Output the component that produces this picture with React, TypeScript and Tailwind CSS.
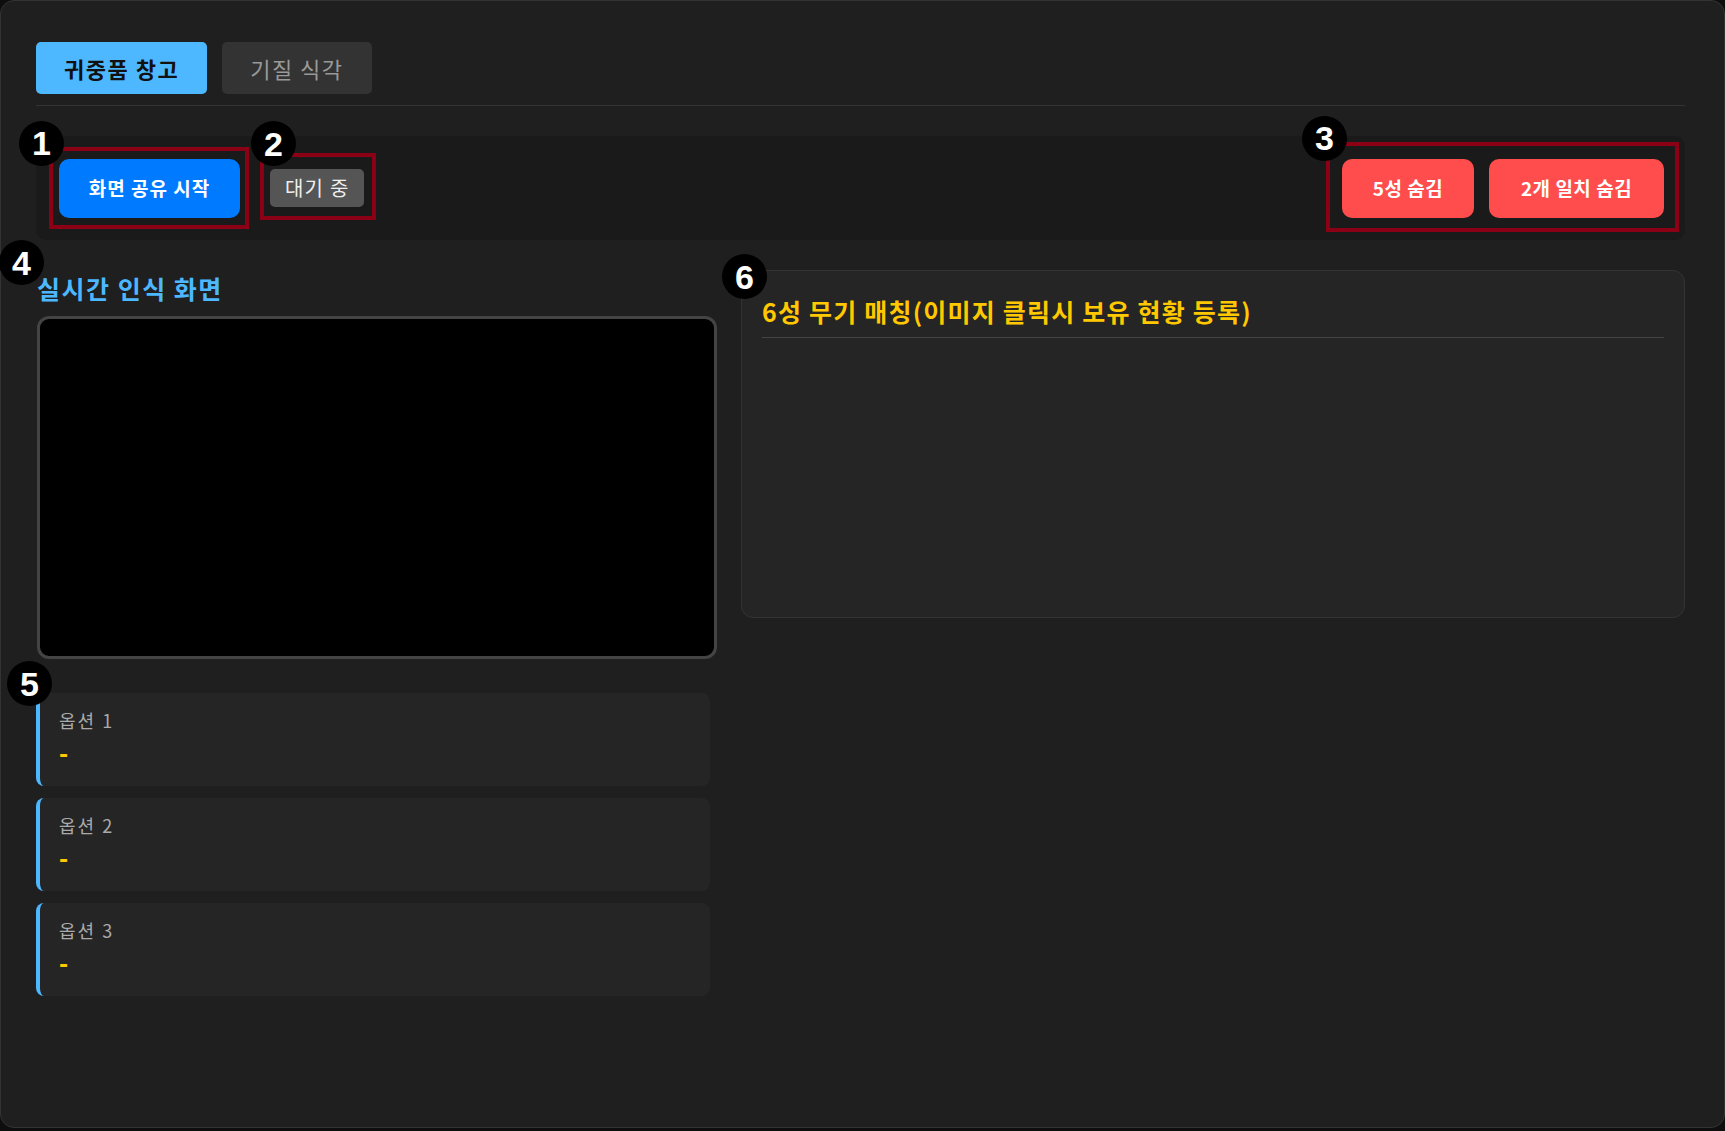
import React from "react";

function Marker({ n, className }: { n: number; className: string }) {
  return (
    <div
      className={`absolute z-20 flex h-[45px] w-[45px] items-center justify-center rounded-full bg-black font-['Liberation_Sans',sans-serif] text-[34px] font-bold leading-none text-white ${className}`}
    >
      {n}
    </div>
  );
}

function Outline({ className }: { className: string }) {
  return (
    <div
      className={`pointer-events-none absolute z-10 border-4 border-[#8b0014] ${className}`}
    />
  );
}

const options = ["옵션 1", "옵션 2", "옵션 3"];

export default function App() {
  return (
    <div className="min-h-screen bg-[#0e0e0e] font-['Noto_Sans_CJK_KR','Noto_Sans',sans-serif]">
      <div className="box-border h-[1128px] w-full rounded-[14px] border border-[#333] bg-[#1f1f1f] pl-[35px] pr-[39px] pt-[41px]">
        {/* tabs */}
        <div className="flex gap-[15px] border-b border-[#333] pb-[11px]">
          <button className="h-[52px] rounded-[5px] bg-[#4db8ff] px-[28px] text-[22px] font-bold tracking-[1.5px] text-[#111]">
            귀중품 창고
          </button>
          <button className="h-[52px] rounded-[5px] bg-[#333] px-[28px] text-[22px] tracking-[1.5px] text-[#999]">
            기질 식각
          </button>
        </div>

        {/* control bar */}
        <div className="mt-[30px] flex h-[104px] items-center justify-between rounded-[10px] bg-[#1a1a1a] pl-[23px] pr-[21px]">
          <div className="flex items-center">
            <div className="relative">
              <Outline className="-bottom-[11px] -left-[10px] -right-[9px] -top-[12px]" />
              <Marker n={1} className="-left-[40px] -top-[38px]" />
              <button className="relative z-0 h-[59px] w-[181px] rounded-[10px] bg-[#007bff] text-[19px] font-bold tracking-[1px] text-white">
                화면 공유 시작
              </button>
            </div>
            <div className="relative ml-[30px]">
              <Outline className="-bottom-[13px] -left-[10px] -right-[12px] -top-[16px]" />
              <Marker n={2} className="-left-[19px] -top-[48px]" />
              <span className="flex h-[38px] items-center rounded-[5px] bg-[#555] px-[15px] text-[20px] tracking-[1.2px] text-[#eee]">
                대기 중
              </span>
            </div>
          </div>
          <div className="relative flex gap-[15px]">
            <Outline className="-bottom-[14px] -left-[16px] -right-[15px] -top-[17px]" />
            <Marker n={3} className="-left-[40px] -top-[43px]" />
            <button className="relative z-20 h-[59px] w-[132px] rounded-[10px] bg-[#ff4d4d] text-[19px] font-bold tracking-[0.5px] text-white">
              5성 숨김
            </button>
            <button className="relative z-20 h-[59px] w-[175px] rounded-[10px] bg-[#ff4d4d] text-[19px] font-bold tracking-[0.5px] text-white">
              2개 일치 숨김
            </button>
          </div>
        </div>

        {/* main */}
        <div className="mt-[30px] grid grid-cols-[681px_1fr] gap-[24px]">
          <div>
            <div className="relative mt-[2px]">
              <Marker n={4} className="-left-[37px] -top-[32px]" />
              <h3 className="pl-[1px] text-[25px] font-bold leading-[32px] tracking-[1.5px] text-[#4db8ff]">
                실시간 인식 화면
              </h3>
            </div>
            <div className="ml-[1px] mt-[12px] h-[343px] rounded-[12px] border-[3px] border-[#444] bg-black" />

            <div className="relative mt-[34px] flex w-[674px] flex-col gap-[12px]">
              <Marker n={5} className="-left-[29px] -top-[32px]" />
              {options.map((o) => (
                <div
                  key={o}
                  className="h-[93px] rounded-[8px] border-l-4 border-[#4db8ff] bg-[#252525] pl-[19px] pt-[15px]"
                >
                  <div className="text-[18px] leading-[24px] tracking-[2px] text-[#aaa]">{o}</div>
                  <div className="mt-[6px] text-[24px] font-black leading-[28px] text-[#ffc800]">
                    -
                  </div>
                </div>
              ))}
            </div>
          </div>

          <div className="relative h-[348px] rounded-[12px] border border-[#333] bg-[#252525] px-[20px] pt-[24px]">
            <Marker n={6} className="-left-[20px] -top-[17px]" />
            <h3 className="border-b border-[#444] pb-[10px] text-[25px] font-bold leading-[32px] tracking-[1.2px] text-[#ffc800]">
              6성 무기 매칭(이미지 클릭시 보유 현황 등록)
            </h3>
          </div>
        </div>
      </div>
    </div>
  );
}
